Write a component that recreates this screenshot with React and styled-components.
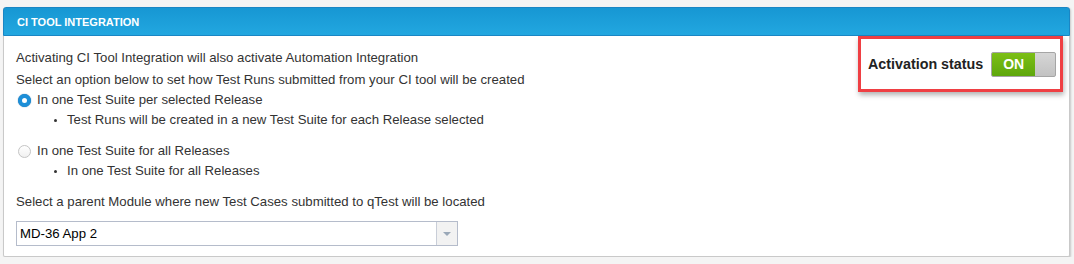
import React from "react";
import styled, { createGlobalStyle } from "styled-components";

const Global = createGlobalStyle`
  body {
    margin: 0;
    background: #f4f4f4;
    font-family: Arial, "Liberation Sans", sans-serif;
  }
`;

const Panel = styled.section`
  margin: 7px 4px 0 3px;
  height: 250px;
  box-sizing: border-box;
  background: #fff;
  border: 1px solid #c9c9c9;
  border-top: none;
  border-radius: 3px 3px 2px 2px;
  box-shadow: 1px 1px 2px rgba(0, 0, 0, 0.18);
`;

const Header = styled.header`
  height: 29px;
  box-sizing: border-box;
  padding-left: 13px;
  display: flex;
  align-items: center;
  background: linear-gradient(#1797d3, #22a7e0);
  border: 1px solid #1a86c4;
  border-radius: 3px 3px 0 0;
  margin: 0 -1px;
  color: #fff;
  font-size: 11px;
  font-weight: bold;
`;

const Body = styled.div`
  display: flex;
  justify-content: space-between;
  align-items: flex-start;
`;

const Content = styled.div`
  padding: 14px 0 0 12px;
  color: #333;
  font-size: 13.2px;
`;

const Line = styled.p`
  margin: 0 0 ${({ gap }) => gap || 6}px;
  line-height: 16px;
`;

const Option = styled.label`
  display: flex;
  align-items: center;
  gap: 6px;
  line-height: 16px;
  padding-left: 2px;
`;

const Radio = styled.span`
  width: 13px;
  height: 13px;
  box-sizing: border-box;
  border-radius: 50%;
  border: ${({ checked }) => (checked ? "4px solid #1d8fd8" : "1px solid #c4c4c4")};
  background: ${({ checked }) => (checked ? "#fff" : "linear-gradient(#fff, #f0f0f0)")};
  box-shadow: ${({ checked }) => (checked ? "0 0 1px #0c5a96" : "none")};
`;

const Bullets = styled.ul`
  margin: 4px 0 ${({ gap }) => gap}px;
  padding-left: 51px;
  line-height: 16px;
  li::marker {
    font-size: 10px;
  }
`;

const SelectBox = styled.div`
  margin-top: 11px;
  width: 442px;
  height: 25px;
  box-sizing: border-box;
  border: 1px solid #b5bccb;
  display: flex;
  align-items: stretch;
  color: #000;
  font-size: 13.2px;
`;

const SelectValue = styled.span`
  flex: 1;
  display: flex;
  align-items: center;
  padding-left: 3px;
`;

const SelectArrow = styled.span`
  width: 20px;
  border-left: 1px solid #c9ced8;
  background: #f2f2f2;
  display: flex;
  align-items: center;
  justify-content: center;
  &::after {
    content: "";
    border-left: 4px solid transparent;
    border-right: 4px solid transparent;
    border-top: 4px solid #9aa8b8;
  }
`;

const StatusBox = styled.div`
  margin-right: 6px;
  width: 205px;
  height: 56px;
  box-sizing: border-box;
  border: 3px solid #ef3f43;
  box-shadow: 1px 3px 5px rgba(0, 0, 0, 0.3);
  display: flex;
  align-items: center;
  padding: 0 0 0 7px;
  gap: 8px;
  font-size: 14.3px;
  font-weight: bold;
  color: #222;
`;

const Toggle = styled.span`
  width: 65px;
  height: 25px;
  box-sizing: border-box;
  border: 1px solid #a5a5a5;
  border-radius: 2px;
  display: flex;
  background: linear-gradient(#d6d6d6, #c2c2c2);
`;

const ToggleOn = styled.span`
  width: 43px;
  background: linear-gradient(#7cbf16, #5ea70c);
  border-radius: 1px 0 0 1px;
  color: #fff;
  font-size: 14px;
  font-weight: bold;
  display: flex;
  align-items: center;
  justify-content: center;
`;

export default function App() {
  return (
    <>
      <Global />
      <Panel>
        <Header>CI TOOL INTEGRATION</Header>
        <Body>
          <Content>
            <Line>Activating CI Tool Integration will also activate Automation Integration</Line>
            <Line gap={4}>Select an option below to set how Test Runs submitted from your CI tool will be created</Line>
            <Option>
              <Radio checked />
              In one Test Suite per selected Release
            </Option>
            <Bullets gap={15}>
              <li>Test Runs will be created in a new Test Suite for each Release selected</li>
            </Bullets>
            <Option>
              <Radio />
              In one Test Suite for all Releases
            </Option>
            <Bullets gap={15}>
              <li>In one Test Suite for all Releases</li>
            </Bullets>
            <Line>Select a parent Module where new Test Cases submitted to qTest will be located</Line>
            <SelectBox>
              <SelectValue>MD-36 App 2</SelectValue>
              <SelectArrow />
            </SelectBox>
          </Content>
          <StatusBox>
            Activation status
            <Toggle>
              <ToggleOn>ON</ToggleOn>
            </Toggle>
          </StatusBox>
        </Body>
      </Panel>
    </>
  );
}
